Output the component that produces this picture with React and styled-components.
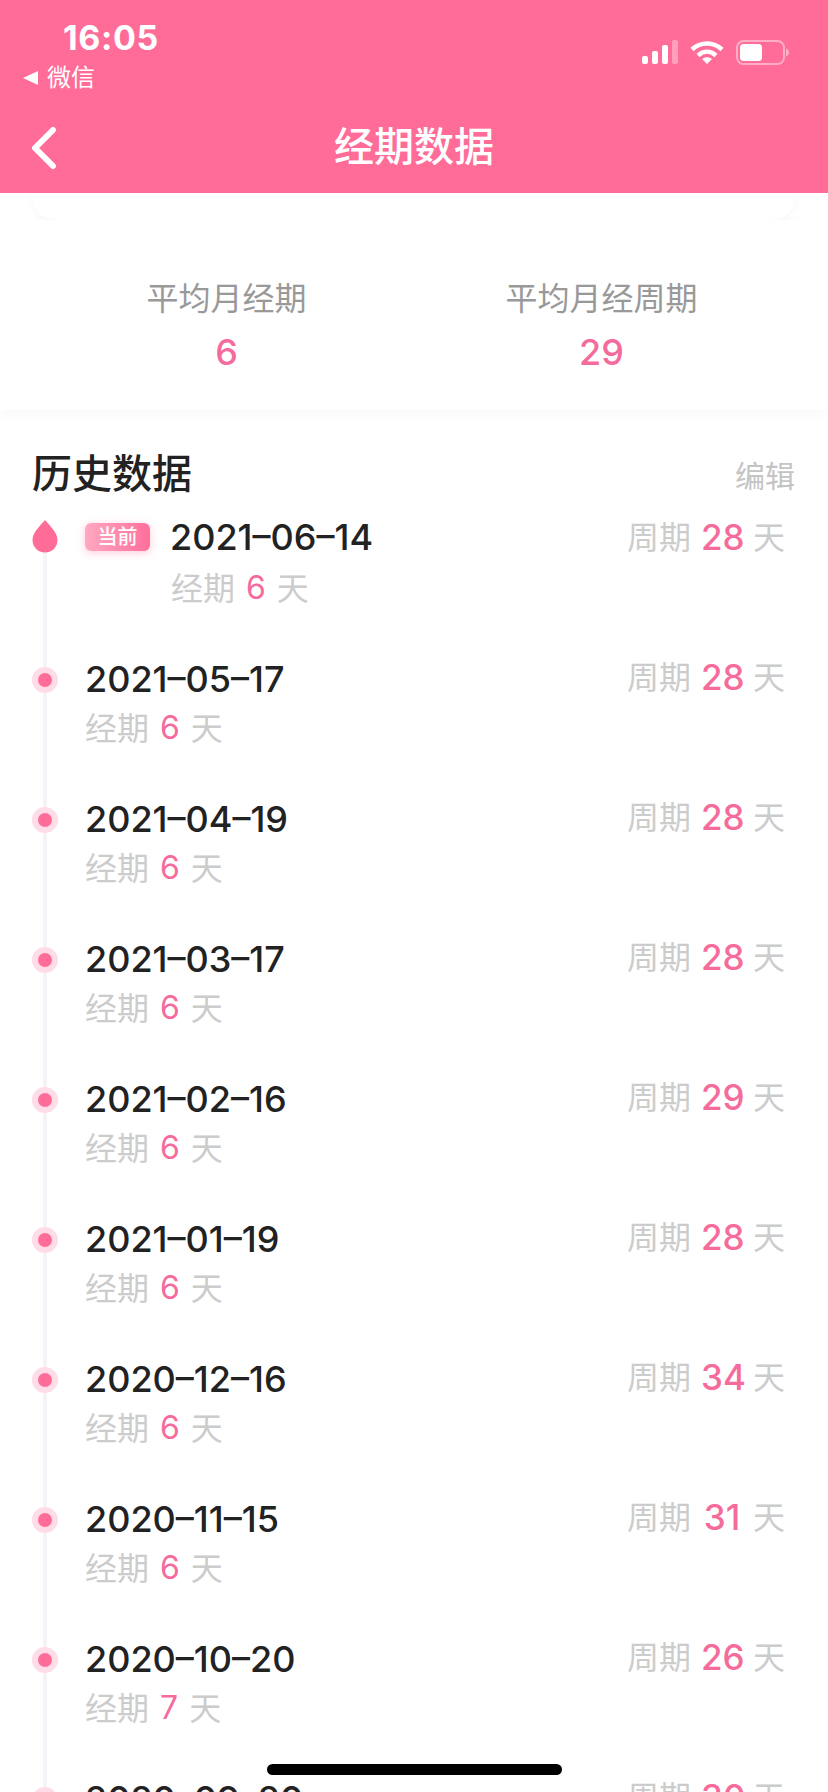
import React from "react";
import styled, { createGlobalStyle } from "styled-components";

const Global = createGlobalStyle`
  html, body { margin: 0; padding: 0; background: #fff; }
  * { box-sizing: border-box; }
`;

const FONT = `Inter, "Noto Sans CJK SC", sans-serif`;

const Page = styled.div`
  position: relative;
  width: 828px;
  height: 1792px;
  overflow: hidden;
  background: #fff;
  font-family: ${FONT};
`;

const Header = styled.header`
  height: 193px;
  background: #ff6c98;
  color: #fff;
  display: flex;
  flex-direction: column;
`;

const StatusBar = styled.div`
  height: 110px;
  padding: 22px 39px 0 23px;
  display: flex;
  justify-content: space-between;
`;

const StatusLeft = styled.div`
  display: flex;
  flex-direction: column;
  gap: 11px;
`;

const Time = styled.div`
  font-weight: 700;
  font-size: 34px;
  line-height: 32px;
  margin-left: 40px;
  letter-spacing: 0.6px;
`;

const BackToApp = styled.div`
  display: flex;
  align-items: center;
  gap: 9px;
  font-size: 24px;
  line-height: 26px;
`;

const Triangle = styled.span`
  width: 0;
  height: 0;
  border-style: solid;
  border-width: 7px 15px 7px 0;
  border-color: transparent #fff transparent transparent;
`;

const StatusIcons = styled.div`
  display: flex;
  align-items: flex-start;
  gap: 12px;
  padding-top: 18px;
`;

const NavBar = styled.div`
  position: relative;
  height: 83px;
  display: flex;
  align-items: flex-start;
  justify-content: center;
`;

const BackIcon = styled.svg`
  position: absolute;
  left: 30px;
  top: 16px;
`;

const Title = styled.h1`
  margin: 0;
  font-size: 40px;
  line-height: 56px;
  font-weight: 500;
  padding-top: 9px;
`;

const CardEnd = styled.div`
  height: 27px;
  margin: 0 32px;
  border-radius: 0 0 24px 24px;
  background: #fff;
  box-shadow: 0 3px 10px rgba(0, 0, 0, 0.035);
`;

const Stats = styled.section`
  height: 190px;
  padding: 57px 39px 0;
  display: grid;
  grid-template-columns: 1fr 1fr;
  background: #fff;
  box-shadow: 0 4px 12px rgba(0, 0, 0, 0.03);
`;

const Stat = styled.div`
  display: flex;
  flex-direction: column;
  align-items: center;
  gap: 9px;
`;

const StatLabel = styled.div`
  font-size: 32px;
  line-height: 44px;
  color: #999;
`;

const StatValue = styled.div`
  font-size: 36px;
  line-height: 44px;
  font-weight: 500;
  color: #f56c9c;
`;

const History = styled.section`
  padding: 40px 33px 0 32px;
`;

const HistoryHead = styled.div`
  display: flex;
  justify-content: space-between;
  align-items: center;
  height: 48px;
`;

const HistoryTitle = styled.h2`
  margin: 0;
  font-size: 40px;
  line-height: 48px;
  font-weight: 500;
  color: #222;
`;

const Edit = styled.button`
  border: 0;
  background: none;
  padding: 0;
  font: inherit;
  font-size: 30px;
  color: #c4c4c4;
`;

const Timeline = styled.div`
  position: relative;
  margin-top: 11px;
  &::before {
    content: "";
    position: absolute;
    left: 11px;
    top: 20px;
    bottom: -200px;
    width: 4px;
    background: #f5f5f9;
  }
`;

const Row = styled.div`
  position: relative;
  height: ${(p) => (p.$first ? "142px" : "140px")};
  display: grid;
  grid-template-columns: 26px 1fr auto;
  column-gap: 27px;
  align-items: start;
  padding-right: 10px;
`;

const Marker = styled.div`
  height: ${(p) => (p.$first ? "54px" : "57px")};
  display: flex;
  align-items: center;
  justify-content: center;
`;

const Halo = styled.span`
  width: 26px;
  height: 26px;
  border-radius: 50%;
  background: #ffdde8;
  display: flex;
  align-items: center;
  justify-content: center;
  &::after {
    content: "";
    width: 14px;
    height: 14px;
    border-radius: 50%;
    background: #ff6c98;
  }
`;

const Main = styled.div`
  display: flex;
  flex-direction: column;
`;

const DateLine = styled.div`
  display: flex;
  align-items: center;
  gap: 20px;
  height: 56px;
`;

const DateText = styled.span`
  font-size: 36px;
  font-weight: 500;
  color: #222;
`;

const Badge = styled.span`
  width: 65px;
  height: 28px;
  border-radius: 6px;
  background: linear-gradient(90deg, #ffa8c2, #ff6f9b);
  box-shadow: 0 2px 8px rgba(255, 108, 152, 0.35);
  color: #fff;
  font-size: 20px;
  font-weight: 500;
  line-height: 28px;
  text-align: center;
`;

const Meta = styled.div`
  display: flex;
  align-items: center;
  height: 37px;
  margin-left: ${(p) => (p.$indent ? "86px" : "0")};
  margin-top: ${(p) => (p.$indent ? "2px" : "0")};
  gap: 11px;
  font-size: 32px;
  color: #ccc;
`;

const Num = styled.span`
  font-size: ${(p) => (p.$big ? "35px" : "32px")};
  font-weight: ${(p) => (p.$big ? 500 : 400)};
  color: #f56c9c;
  width: ${(p) => (p.$big ? "42px" : "auto")};
  padding-top: ${(p) => (p.$big ? "4px" : "3px")};
  text-align: center;
`;

const Cycle = styled(Meta)`
  height: 48px;
  gap: 10px;
  margin-left: 0;
`;

const HomeBar = styled.div`
  position: absolute;
  left: 267px;
  bottom: 17px;
  width: 295px;
  height: 11px;
  border-radius: 6px;
  background: #000;
`;

const rows = [
  ["2021-06-14", 6, 28],
  ["2021-05-17", 6, 28],
  ["2021-04-19", 6, 28],
  ["2021-03-17", 6, 28],
  ["2021-02-16", 6, 29],
  ["2021-01-19", 6, 28],
  ["2020-12-16", 6, 34],
  ["2020-11-15", 6, 31],
  ["2020-10-20", 7, 26],
  ["2020-09-20", 6, 30],
];

const SignalIcon = () => (
  <svg width="36" height="24" viewBox="0 0 36 24">
    <rect x="0" y="16" width="6" height="8" rx="2" fill="#fff" />
    <rect x="10" y="11" width="6" height="13" rx="2" fill="#fff" />
    <rect x="20" y="5" width="6" height="19" rx="2" fill="#fff" />
    <rect x="30" y="0" width="6" height="24" rx="2" fill="#fff" opacity="0.35" />
  </svg>
);

const WifiIcon = () => (
  <svg width="34" height="24" viewBox="0 0 34 24" fill="none">
    <path d="M2 9.500C10.500 1.500 23.500 1.500 32 9.500" stroke="#fff" strokeWidth="4.500" />
    <path d="M8 15.500C13.500 10.500 20.500 10.500 26 15.500" stroke="#fff" strokeWidth="4.500" />
    <path d="M12 19L17 24L22 19C19 16.500 15 16.500 12 19Z" fill="#fff" />
  </svg>
);

const BatteryIcon = () => (
  <svg width="53" height="25" viewBox="0 0 53 25" fill="none">
    <rect x="1" y="1" width="47" height="23" rx="6.500" stroke="#fff" strokeOpacity="0.45" strokeWidth="2" />
    <rect x="4" y="4" width="22" height="17" rx="3.500" fill="#fff" />
    <path d="M50 8.500C52 9.300 53 10.700 53 12.500C53 14.300 52 15.700 50 16.500Z" fill="#fff" fillOpacity="0.45" />
  </svg>
);

const DropIcon = () => (
  <svg width="26" height="33" viewBox="0 0 26 33">
    <path d="M13 0C17 5 25.500 12 25.500 20C25.500 27 20 32.500 13 32.500C6 32.500 0.500 27 0.500 20C0.500 12 9 5 13 0Z" fill="#ff6c98" />
  </svg>
);

const dash = (s) => s.replace(/-/g, "\u2013");

export default function App() {
  return (
    <Page>
      <Global />
      <Header>
        <StatusBar>
          <StatusLeft>
            <Time>16:05</Time>
            <BackToApp>
              <Triangle />
              微信
            </BackToApp>
          </StatusLeft>
          <StatusIcons>
            <SignalIcon />
            <WifiIcon />
            <BatteryIcon />
          </StatusIcons>
        </StatusBar>
        <NavBar>
          <BackIcon width="28" height="44" viewBox="0 0 28 44" fill="none">
            <path d="M23 4L5 22L23 40" stroke="#fff" strokeWidth="6" strokeLinecap="round" strokeLinejoin="round" />
          </BackIcon>
          <Title>经期数据</Title>
        </NavBar>
      </Header>
      <CardEnd />
      <Stats>
        <Stat>
          <StatLabel>平均月经期</StatLabel>
          <StatValue>6</StatValue>
        </Stat>
        <Stat>
          <StatLabel>平均月经周期</StatLabel>
          <StatValue>29</StatValue>
        </Stat>
      </Stats>
      <History>
        <HistoryHead>
          <HistoryTitle>历史数据</HistoryTitle>
          <Edit>编辑</Edit>
        </HistoryHead>
        <Timeline>
          {rows.map(([date, period, cycle], i) => (
            <Row key={date} $first={i === 0}>
              <Marker $first={i === 0}>{i === 0 ? <DropIcon /> : <Halo />}</Marker>
              <Main>
                <DateLine>
                  {i === 0 && <Badge>当前</Badge>}
                  <DateText>{dash(date)}</DateText>
                </DateLine>
                <Meta $indent={i === 0}>
                  经期 <Num>{period}</Num> 天
                </Meta>
              </Main>
              <Cycle $indent={i === 0}>
                周期 <Num $big>{cycle}</Num> 天
              </Cycle>
            </Row>
          ))}
        </Timeline>
      </History>
      <HomeBar />
    </Page>
  );
}
